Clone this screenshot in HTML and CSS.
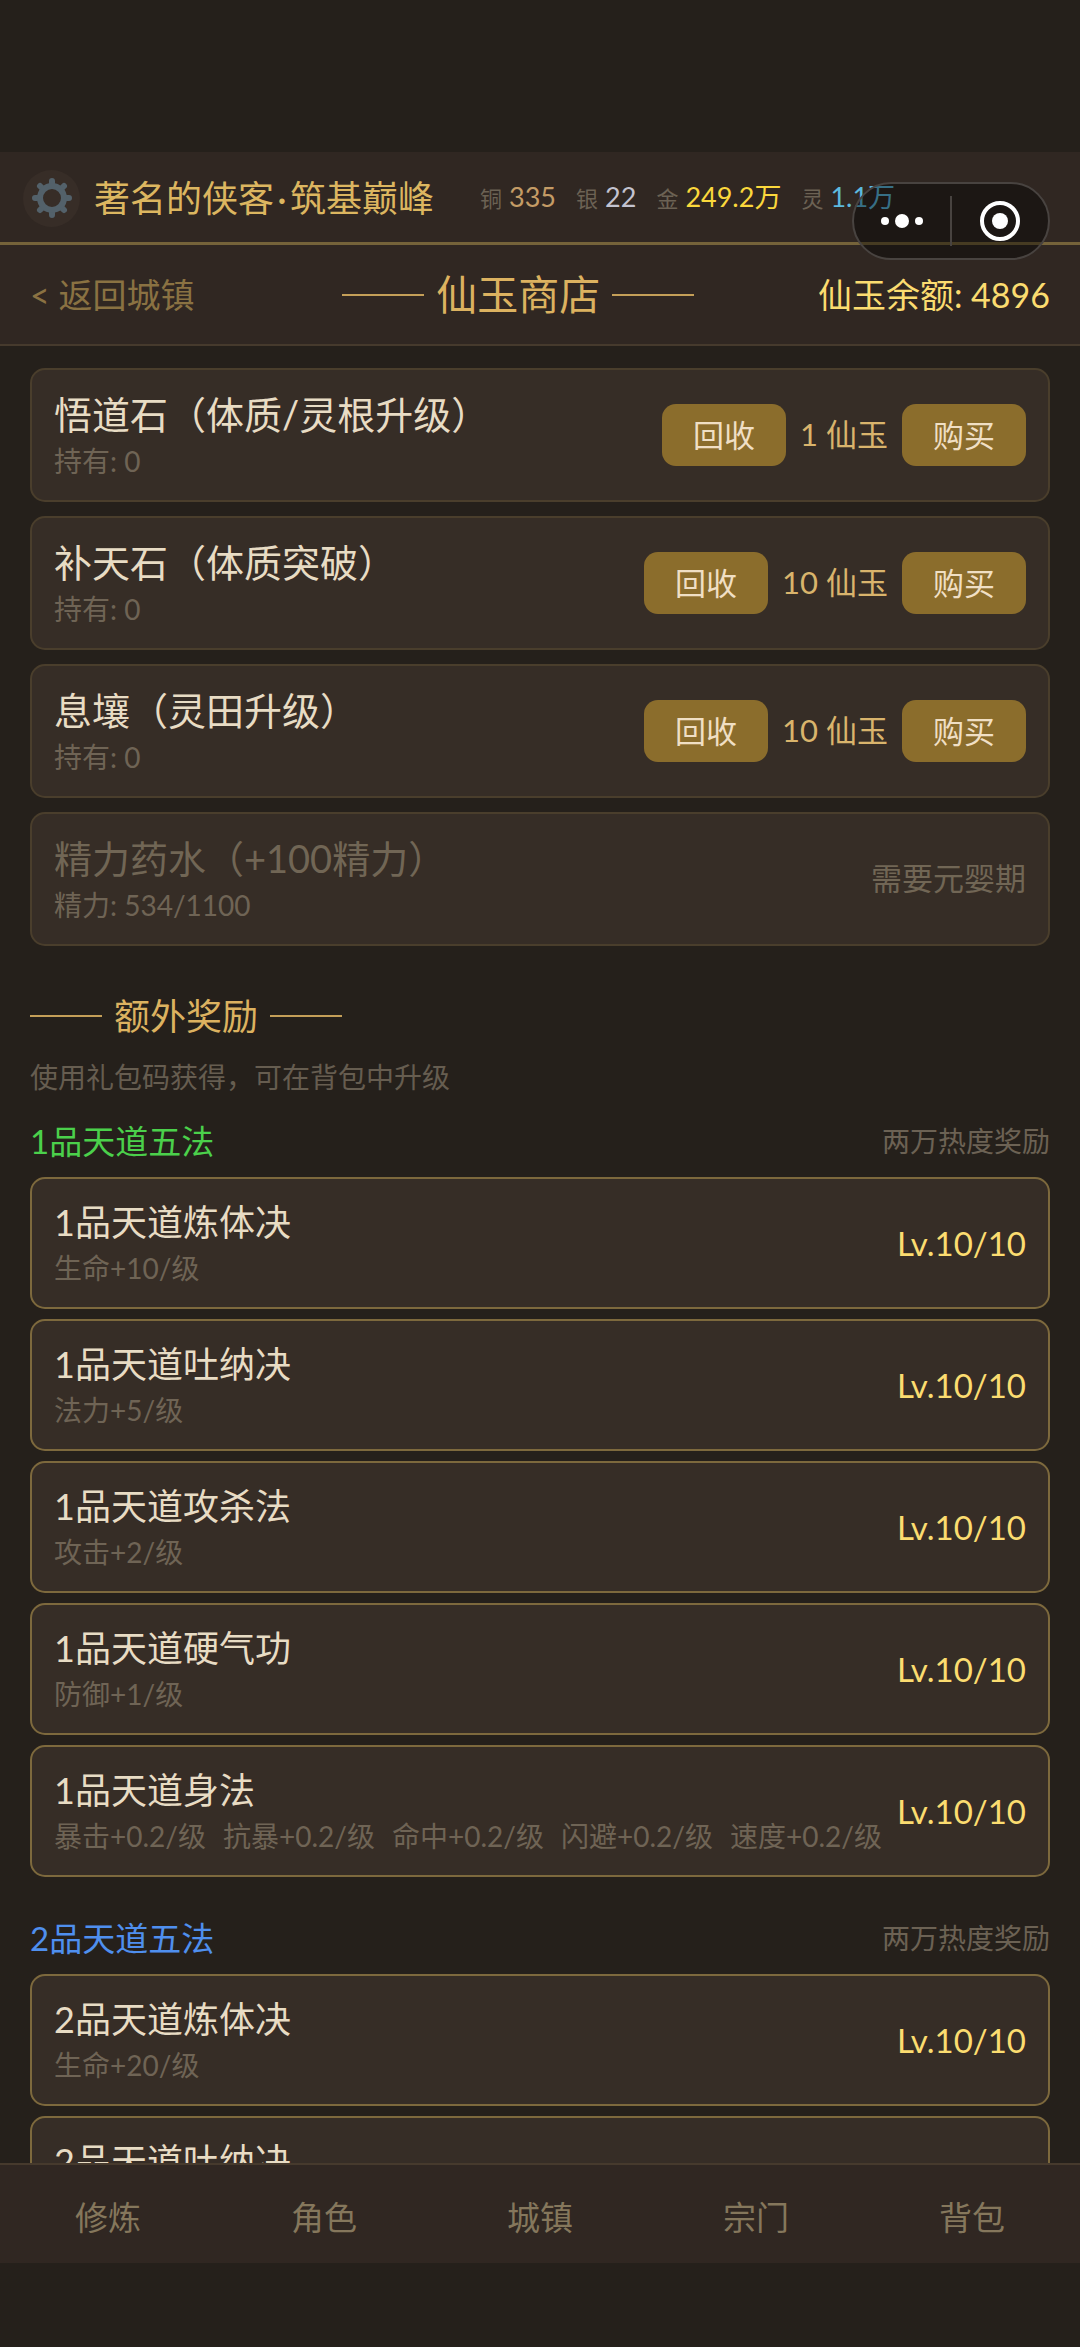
FILE: index.html
```
<!DOCTYPE html>
<html lang="zh-CN">
<head>
<meta charset="UTF-8">
<meta name="viewport" content="width=device-width, initial-scale=1.0">
<title>仙玉商店</title>
<link rel="stylesheet" href="styles.css">
</head>
<body>

<header class="topbar">
    <button class="settings" aria-label="设置">
        <svg viewBox="0 0 42 42" width="42" height="42">
            <g stroke="#53616a" stroke-width="6" stroke-linecap="round">
                <path d="M21 4v6M21 32v6M4 21h6M32 21h6"/>
                <path d="M9 9l4 4M29 29l4 4M33 9l-4 4M13 29l-4 4"/>
            </g>
            <circle cx="21" cy="21" r="12" fill="#372d27" stroke="#53616a" stroke-width="6"/>
        </svg>
    </button>
    <div class="player">著名的侠客<span class="dot">·</span>筑基巅峰</div>
    <div class="coins">
        <span class="coin copper"><small>铜</small>335</span>
        <span class="coin silver"><small>银</small>22</span>
        <span class="coin gold"><small>金</small>249.2万</span>
        <span class="coin spirit"><small>灵</small>1.1万</span>
    </div>
</header>

<div class="capsule">
    <button class="capsule-btn" aria-label="更多">
        <svg viewBox="0 0 42 42" width="42" height="42" fill="#fff">
            <circle cx="4" cy="21" r="4"/>
            <circle cx="21" cy="21" r="7"/>
            <circle cx="38" cy="21" r="4"/>
        </svg>
    </button>
    <button class="capsule-btn" aria-label="关闭">
        <svg viewBox="0 0 42 42" width="42" height="42">
            <circle cx="21" cy="21" r="18" fill="none" stroke="#fff" stroke-width="4"/>
            <circle cx="21" cy="21" r="8" fill="#fff"/>
        </svg>
    </button>
</div>

<div class="titlebar">
    <a class="back" href="#">&lt; 返回城镇</a>
    <h1 class="lined">仙玉商店</h1>
    <div class="balance">仙玉余额: 4896</div>
</div>

<main class="content">
    <ul class="goods">
        <li class="card">
            <div class="info">
                <div class="name">悟道石（体质/灵根升级）</div>
                <div class="sub">持有: 0</div>
            </div>
            <button class="btn">回收</button>
            <span class="price">1 仙玉</span>
            <button class="btn">购买</button>
        </li>
        <li class="card">
            <div class="info">
                <div class="name">补天石（体质突破）</div>
                <div class="sub">持有: 0</div>
            </div>
            <button class="btn">回收</button>
            <span class="price">10 仙玉</span>
            <button class="btn">购买</button>
        </li>
        <li class="card">
            <div class="info">
                <div class="name">息壤（灵田升级）</div>
                <div class="sub">持有: 0</div>
            </div>
            <button class="btn">回收</button>
            <span class="price">10 仙玉</span>
            <button class="btn">购买</button>
        </li>
        <li class="card locked">
            <div class="info">
                <div class="name">精力药水（+100精力）</div>
                <div class="sub">精力: 534/1100</div>
            </div>
            <span class="price">需要元婴期</span>
        </li>
    </ul>

    <h2 class="lined">额外奖励</h2>
    <p class="tip">使用礼包码获得，可在背包中升级</p>

    <section class="group">
        <div class="group-head">
            <h3 class="green">1品天道五法</h3>
            <span>两万热度奖励</span>
        </div>
        <ul class="skills">
            <li class="card">
                <div class="info">
                    <div class="name">1品天道炼体决</div>
                    <div class="sub">生命+10/级</div>
                </div>
                <span class="level">Lv.10/10</span>
            </li>
            <li class="card">
                <div class="info">
                    <div class="name">1品天道吐纳决</div>
                    <div class="sub">法力+5/级</div>
                </div>
                <span class="level">Lv.10/10</span>
            </li>
            <li class="card">
                <div class="info">
                    <div class="name">1品天道攻杀法</div>
                    <div class="sub">攻击+2/级</div>
                </div>
                <span class="level">Lv.10/10</span>
            </li>
            <li class="card">
                <div class="info">
                    <div class="name">1品天道硬气功</div>
                    <div class="sub">防御+1/级</div>
                </div>
                <span class="level">Lv.10/10</span>
            </li>
            <li class="card">
                <div class="info">
                    <div class="name">1品天道身法</div>
                    <div class="sub stats">
                        <span>暴击+0.2/级</span>
                        <span>抗暴+0.2/级</span>
                        <span>命中+0.2/级</span>
                        <span>闪避+0.2/级</span>
                        <span>速度+0.2/级</span>
                    </div>
                </div>
                <span class="level">Lv.10/10</span>
            </li>
        </ul>
    </section>

    <section class="group">
        <div class="group-head">
            <h3 class="blue">2品天道五法</h3>
            <span>两万热度奖励</span>
        </div>
        <ul class="skills">
            <li class="card">
                <div class="info">
                    <div class="name">2品天道炼体决</div>
                    <div class="sub">生命+20/级</div>
                </div>
                <span class="level">Lv.10/10</span>
            </li>
            <li class="card">
                <div class="info">
                    <div class="name">2品天道吐纳决</div>
                </div>
            </li>
        </ul>
    </section>
</main>

<nav class="tabbar">
    <a href="#">修炼</a>
    <a href="#">角色</a>
    <a href="#">城镇</a>
    <a href="#">宗门</a>
    <a href="#">背包</a>
</nav>

</body>
</html>
```
FILE: styles.css
```
* {
    box-sizing: border-box;
    margin: 0;
    padding: 0;
}
body {
    display: flex;
    flex-direction: column;
    height: 100vh;
    padding: 152px 0 84px;
    background-color: #25201b;
    color: #e8dcc4;
    font-family: Lato, "Noto Sans CJK SC", sans-serif;
    font-size: 28px;
    line-height: 40px;
    white-space: nowrap;
}
ul {
    list-style: none;
}
a {
    text-decoration: none;
}
button {
    border: none;
    font-family: inherit;
    cursor: pointer;
}
h1, h2, h3 {
    font-weight: normal;
}

/* top bar */
.topbar {
    display: flex;
    align-items: center;
    height: 93px;
    padding: 2px 23px 0;
    background-color: #302722;
    border-bottom: 3px solid #75633a;
}
.settings {
    display: flex;
    align-items: center;
    justify-content: center;
    width: 57px;
    height: 57px;
    border-radius: 50%;
    background-color: #372d27;
}
.player {
    margin-left: 14px;
    font-size: 36px;
    color: #dcb660;
}
.dot {
    display: inline-block;
    width: 16px;
    text-align: center;
}
.coins {
    display: flex;
    gap: 20px;
    margin-left: 46px;
    font-size: 27px;
}
.coin small {
    margin-right: 7px;
    font-size: 22px;
    color: #6c6254;
}
.copper {
    color: #c49c66;
}
.silver {
    color: #c3c3d0;
}
.gold {
    color: #fbd83c;
}
.spirit {
    color: #5cb9de;
}

/* floating capsule menu */
.capsule {
    position: absolute;
    top: 182px;
    right: 30px;
    display: flex;
    align-items: center;
    width: 198px;
    height: 78px;
    border: 2px solid #484340;
    border-radius: 39px;
    background-color: rgba(0, 0, 0, 0.4);
}
.capsule-btn {
    display: flex;
    flex: 1;
    align-items: center;
    justify-content: center;
    height: 50px;
    background: none;
}
.capsule-btn + .capsule-btn {
    border-left: 2px solid #484340;
}

/* page title */
.titlebar {
    display: flex;
    align-items: center;
    justify-content: space-between;
    height: 101px;
    padding: 0 30px;
    background-color: #302722;
    border-bottom: 2px solid #463a2d;
    font-size: 34px;
}
.back {
    padding-right: 24px;
    color: #8a7242;
}
.balance {
    color: #fbdc70;
}
.lined {
    display: flex;
    align-items: center;
    gap: 12px;
    color: #dcb260;
}
.lined::before,
.lined::after {
    content: "";
    width: 2em;
    height: 2px;
    background-color: #c49f58;
}
h1 {
    font-size: 41px;
}
h2 {
    margin-top: 46px;
    font-size: 36px;
    line-height: 48px;
}

/* list */
.content {
    flex: 1;
    min-height: 0;
    padding: 22px 30px 0;
    overflow-y: auto;
    scrollbar-width: none;
}
.goods,
.skills {
    display: flex;
    flex-direction: column;
    gap: 14px;
}
.card {
    display: flex;
    align-items: center;
    gap: 14px;
    min-height: 132px;
    padding: 18px 22px;
    border: 2px solid #4a3e2c;
    border-radius: 15px;
    background-color: #362d26;
}
.info {
    flex: 1;
    align-self: flex-start;
}
.name {
    font-size: 38px;
    line-height: 52px;
}
.sub {
    line-height: 42px;
    color: #6f6455;
}
.price {
    padding-bottom: 2px;
    font-size: 31px;
    color: #d9b46c;
}
.btn {
    height: 62px;
    padding: 0 31px 3px;
    border-radius: 14px;
    background-color: #8b6d2c;
    color: #f0dfc4;
    font-size: 31px;
}
.locked .name,
.locked .price {
    color: #716655;
}
.tip {
    margin: 17px 0 20px;
    color: #665d50;
}
.group {
    margin-bottom: 37px;
}
.group-head {
    display: flex;
    align-items: center;
    justify-content: space-between;
    margin-bottom: 12px;
    line-height: 48px;
    color: #6c6254;
}
h3 {
    font-size: 33px;
}
.green {
    color: #4bd04b;
}
.blue {
    color: #4f8fee;
}
.skills {
    gap: 10px;
}
.skills .card {
    border-color: #7d693d;
}
.skills .name {
    font-size: 36px;
    line-height: 50px;
}
.stats {
    display: flex;
    gap: 17px;
}
.level {
    color: #fbdc70;
    font-size: 33px;
}

/* bottom tabs */
.tabbar {
    display: flex;
    align-items: center;
    height: 100px;
    padding-top: 5px;
    border-top: 2px solid #463a2d;
    background-color: #302722;
}
.tabbar a {
    flex: 1;
    text-align: center;
    font-size: 33px;
    color: #85775c;
}
```
